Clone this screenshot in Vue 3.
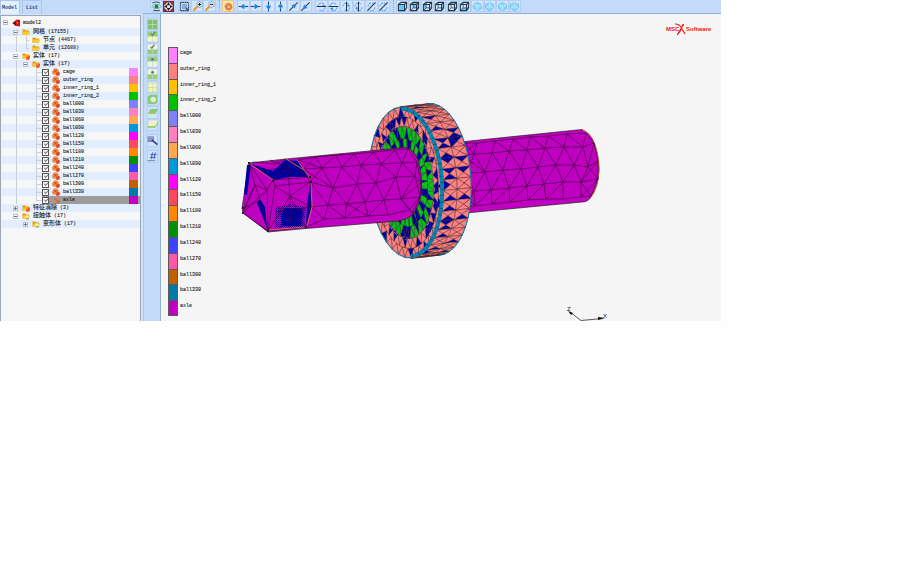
<template>
    <main class="workbench">
        <aside class="model-panel">
            <nav class="tabs">
                <button type="button" class="tab tabActive">Model</button>
                <button type="button" class="tab">List</button>
            </nav>
            <ul class="tree">
                <li v-for="(node, i) in nodes" :key="i" class="row" :class="{ root: i === 0, selected: node.selected }">
                    <i v-for="(g, k) in node.guides.split('')" :key="k" class="guide" :class="guideClass(g)"></i>
                    <component :is="node.leaf ? 'label' : 'div'" class="row-body">
                        <input v-if="node.leaf" type="checkbox" class="check" checked />
                        <button v-else-if="node.toggle" type="button" class="toggle" :class="{ closed: node.toggle === '+' }" :aria-label="'toggle ' + node.name"></button>
                        <i v-else class="guide short" :class="guideClass(node.elbow)"></i>
                        <svg class="node-icon" viewBox="0 0 16 16">
                            <path v-for="(p, k) in nodeIcons[node.icon]" :key="k" v-bind="p" />
                        </svg>
                        <span class="name" :class="{ cjk: !node.leaf && i > 0 }">{{ node.name }}</span>
                        <span v-if="node.count" class="count">({{ node.count }})</span>
                        <span v-if="node.color" class="swatch" :style="{ background: node.color }"></span>
                    </component>
                </li>
            </ul>
        </aside>

        <section class="work-area">
            <div class="toolbar">
                <div v-for="(group, g) in topGroups" :key="g" class="tool-group" :class="'group-' + group.name">
                    <button v-for="(icon, k) in group.icons" :key="k" type="button" class="tool" :class="{ toolActive: icon === 'palette' }" :aria-label="icon">
                        <svg viewBox="0 0 16 16">
                            <path v-for="(p, n) in toolIcons[icon]" :key="n" fill="none" v-bind="p" />
                        </svg>
                    </button>
                </div>
            </div>
            <div class="dock">
                <div v-for="(group, g) in sideGroups" :key="g" class="side-group" :class="{ many: group.length > 1 }">
                    <button v-for="(icon, k) in group" :key="k" type="button" class="tool" :aria-label="icon">
                        <svg viewBox="0 0 16 16">
                            <path v-for="(p, n) in toolIcons[icon]" :key="n" fill="none" v-bind="p" />
                        </svg>
                    </button>
                </div>
            </div>
            <div class="viewport">
                <ul class="legend">
                    <li v-for="part in parts" :key="part.name">
                        <span class="legend-color" :style="{ background: part.color }"></span>
                        <span class="legend-name">{{ part.name }}</span>
                    </li>
                </ul>
                <svg class="scene" viewBox="225 14 496 307">
                    <defs>
                        <pattern id="dither" width="2" height="2" patternUnits="userSpaceOnUse">
                            <path d="M0 0h1v1h-1zM1 1h1v1h-1z" fill="#0000a0" />
                        </pattern>
                    </defs>

                    <!-- right half of the axle -->
                    <path d="M460 142L577 130L582 129.500Q588 132 592 138Q599 152 599 170Q598 188 591 197Q588 202 582 202L466 213Z" fill="#c000c0" stroke="#222" stroke-width=".7" />
                    <path d="M582 129.500Q588 132 592 138Q599 152 599 170Q598 188 591 197" fill="none" stroke="#d4603c" stroke-width="1" />
                    <path :d="rightMesh" class="mesh" />

                    <!-- bearing -->
                    <path v-for="(t, k) in sideFaces" :key="'s' + k" :d="t.d" :fill="t.fill" class="face" />
                    <path :d="rimBack" class="rim thin" />
                    <path v-for="(t, k) in frontFaces" :key="'f' + k" :d="t.d" :fill="t.fill" class="face" />
                    <path :d="ringPath(0.99)" class="rim thin" />
                    <path :d="rimFront" class="rim" />
                    <path :d="rimFront" class="rim-marks" />
                    <path :d="ringPath(0.76)" class="cage" />
                    <path :d="ringPath(0.73)" class="cage-marks" />

                    <!-- left half of the axle -->
                    <path d="M249 163L286 159L405 147.500Q414 149 418 160Q423 176 421 194Q419 208 412 215Q407 220 398 221L300 229L268 232L243 213L242 208Z" fill="#c000c0" stroke="#222" stroke-width=".7" />
                    <path :d="leftMesh" class="mesh" />
                    <path d="M251 164L273 171L285 160L298 161L309 177L289 177L274 180ZM247 165L251 165L247 195L244 194ZM260 199L265 207L267 228L257 203ZM311 182L312 207L306 225L307 203ZM285 208L300 208L303 212L301 226L281 226L281 214Z" fill="#0000a0" />
                    <path d="M275 208L290 204L306 207L304 228L275 228Z" fill="url(#dither)" />
                    <path :d="headMesh" class="mesh" />
                    <path d="M250 164L273 180M298 161L309 177M286 159L304 170M311 183L312 207L307 226M269 230L304 227" fill="none" stroke="#f07850" stroke-width=".8" />
                    <path d="M248 162h2v2h-2zM272 180h2v2h-2zM309 176h2v2h-2zM310 181h2v2h-2zM267 230h2v2h-2zM242 212h2v2h-2zM305 226h2v2h-2zM242 207h2v2h-2z" fill="#222" />

                    <!-- vendor mark -->
                    <g class="vendor">
                        <text x="666" y="31">MSC</text>
                        <text x="686" y="31">Software</text>
                        <path d="M675 24Q680 24 682 29L685 34M677 35Q680 31 683 25M678 34L681 30" />
                        <circle cx="683" cy="25" r="1" />
                    </g>

                    <!-- axes -->
                    <path d="M603 318.500L581 320.500L570 312" fill="none" stroke="#333" stroke-width=".8" />
                    <path d="M605 318L598 317L598 320ZM568 311L571 315L573 313Z" fill="#111" />
                    <text x="567" y="311" class="axis">Z</text>
                    <text x="603" y="318" class="axis">X</text>
                </svg>
            </div>
        </section>
    </main>
</template>

<script setup>
    const parts = [
        { name: 'cage', color: '#ff80ff' },
        { name: 'outer_ring', color: '#ff8080' },
        { name: 'inner_ring_1', color: '#ffc000' },
        { name: 'inner_ring_2', color: '#00c000' },
        { name: 'ball000', color: '#8080ff' },
        { name: 'ball030', color: '#ff80c0' },
        { name: 'ball060', color: '#ffa850' },
        { name: 'ball090', color: '#0098d8' },
        { name: 'ball120', color: '#ff00ff' },
        { name: 'ball150', color: '#ff4860' },
        { name: 'ball180', color: '#ff8800' },
        { name: 'ball210', color: '#009000' },
        { name: 'ball240', color: '#4040ff' },
        { name: 'ball270', color: '#ff58a8' },
        { name: 'ball300', color: '#c06000' },
        { name: 'ball330', color: '#0078a8' },
        { name: 'axle', color: '#c000c0' }
    ];

    // guides: one character per indent level, "|" line, "+" tee, "L" last corner
    const nodes = [
        { name: 'model2', guides: '', toggle: '-', icon: 'model' },
        { name: '网格', count: '17155', guides: ' ', toggle: '-', icon: 'folder' },
        { name: '节点', count: '4467', guides: ' |', elbow: '+', icon: 'folder' },
        { name: '单元', count: '12688', guides: ' |', elbow: 'L', icon: 'folder' },
        { name: '实体', count: '17', guides: ' ', toggle: '-', icon: 'bodies' },
        { name: '实体', count: '17', guides: ' |', toggle: '-', icon: 'bodies' },
        ...parts.map((part, i) => ({
            ...part,
            guides: i === parts.length - 1 ? ' | L' : ' | +',
            leaf: true,
            icon: 'part',
            selected: part.name === 'axle'
        })),
        { name: '特征消除', count: '3', guides: ' ', toggle: '+', icon: 'bodies' },
        { name: '接触体', count: '17', guides: ' ', toggle: '-', icon: 'contact' },
        { name: '变形体', count: '17', guides: '  ', toggle: '+', icon: 'contact' }
    ];

    const guideClass = (g) => ({ '|': 'line', '+': 'line stub', 'L': 'corner stub' }[g]);

    const folder = [
        { d: 'M1 3h5l2 2h6v8h-13z', fill: '#e0a010' },
        { d: 'M3 7h13l-2 7h-13z', fill: '#ffc830' }
    ];
    const nodeIcons = {
        model: [
            { d: 'M1 8L9 1L16 2V15L8 14Z', fill: '#d01818' },
            { d: 'M1 8L8 5V14ZM12 3L16 2V8Z', fill: '#701010' },
            { d: 'M9 5l4 2-3 4z', fill: '#f06060' }
        ],
        folder,
        bodies: [...folder, { d: 'M8 9h4v-2h4v6l-3 3h-4z', fill: '#f06028' }],
        contact: [...folder, { d: 'M7 7h6v6h-6z', fill: '#fff0a0' }, { d: 'M8 12h6l-2 3h-3z', fill: '#8090a0' }],
        part: [
            { d: 'M1 6L4 1L10 1L13 4V8L9 7L7 13H2L0 9Z', fill: '#f08038' },
            { d: 'M4 5h5v3h-3z', fill: '#b85828' },
            { d: 'M9 8L13 7L16 10L15 15L10 16L7 13Z', fill: '#e84820' }
        ]
    };

    const blue = '#2080e8';
    const dark = '#26364a';
    const lens = (sign) => [
        { d: 'M2 14L8 8', stroke: '#e0a020', 'stroke-width': 3 },
        { d: 'M7 5a4 4 0 1 0 8 0a4 4 0 1 0-8 0', stroke: '#6a8098', fill: '#e8f4ff' },
        { d: sign, stroke: '#111', 'stroke-width': 1.5 }
    ];
    const cube = (face) => [
        { d: face, fill: '#60c8f8' },
        { d: 'M2 5h9v9h-9zM2 5l4-3h8v8l-3 4M11 5l3-3', stroke: dark, 'stroke-width': 1.5 }
    ];
    const wire = { d: 'M6 2v8h8M6 10l-4 4', stroke: dark };
    const ball = (d) => [
        { d: 'M2 5L8 2L14 5V11L8 14L2 11Z', fill: '#90d8ff', stroke: '#58b8f0' },
        { d, stroke: '#d0f0ff', 'stroke-width': 1 }
    ];
    const orbit = { d: 'M3 8a5 5 0 0 1 9-3M13 9a5 5 0 0 1-9 3', stroke: '#58a0f0', 'stroke-width': 1.5, 'stroke-dasharray': '3 1' };
    const tiles = (top, bottom) => [
        { d: 'M1 1h14v7h-14z', fill: top },
        { d: 'M1 8h14v7h-14z', fill: bottom },
        { d: 'M8 1v14M1 8h14', stroke: '#c0dcb0' }
    ];
    const axisLine = (d) => ({ d, stroke: dark, 'stroke-width': 1.5 });

    const toolIcons = {
        eye: [
            { d: 'M1 8Q8 1 15 8Q8 14 1 8', fill: '#e8f8f0', stroke: '#508878' },
            { d: 'M5 8a3 3 0 1 0 6 0a3 3 0 1 0-6 0', fill: '#188048' },
            { d: 'M2 3q6-3 11 0M3 13q6 2 10 0', stroke: '#405870', 'stroke-width': 1.5 }
        ],
        fit: [
            { d: 'M1 1h14v14h-14z', fill: '#e8e8ee', stroke: '#a01820', 'stroke-width': 2 },
            { d: 'M8 2l3 4h-6zM8 14l3-4h-6zM2 8l4-3v6zM14 8l-4-3v6zM2 2h4l-4 4zM14 2h-4l4 4zM2 14h4l-4-4zM14 14h-4l4-4z', fill: '#222' }
        ],
        area: [
            { d: 'M4 4h8v8h-8z', fill: '#80b0e0' },
            { d: 'M2 2h12v12h-12z', stroke: '#223', 'stroke-width': 1.5, 'stroke-dasharray': '2 1' },
            { d: 'M9 9l6 3-3 3z', fill: '#405070' }
        ],
        zoomIn: lens('M9 5h4M11 3v4'),
        zoomOut: lens('M9 5h4'),
        palette: [
            { d: 'M8 2L13 5L14 10L10 14L4 13L2 8L4 4Z', fill: '#e88848' },
            { d: 'M6 7l2-1 3 2v2l-3 1-2-1z', fill: '#ffd8a0', stroke: '#c06028' }
        ],
        left: [axisLine('M1 8h14'), { d: 'M3 8l6-4v3h3v2h-3v3z', fill: blue }],
        right: [axisLine('M1 8h14'), { d: 'M13 8l-6-4v3h-3v2h3v3z', fill: blue }],
        down: [axisLine('M8 1v14'), { d: 'M8 13l-4-6h3v-3h2v3h3z', fill: blue }],
        up: [axisLine('M8 1v14'), { d: 'M8 3l-4 6h3v3h2v-3h3z', fill: blue }],
        out: [axisLine('M2 14L14 2'), { d: 'M12 4l-2 7-5-5z', fill: blue }],
        into: [axisLine('M2 14L14 2'), { d: 'M4 12l2-7 5 5z', fill: blue }],
        rotX1: [orbit, axisLine('M1 8h14'), { d: 'M11 5l3 2h-5z', fill: blue }],
        rotX2: [orbit, axisLine('M1 8h14'), { d: 'M3 11l4-2v4z', fill: blue }],
        rotY1: [orbit, axisLine('M8 1v14'), { d: 'M9 5l4 1-3 3z', fill: blue }],
        rotY2: [orbit, axisLine('M8 1v14'), { d: 'M7 12l-4-1 3-3z', fill: blue }],
        rotZ: [orbit, axisLine('M2 14L14 2')],
        cubeFront: cube('M2 5h9v9h-9z'),
        cubeBack: [...cube('M6 2h8v8h-8z'), wire],
        cubeLeft: [...cube('M2 5l4-3v8l-4 4z'), wire],
        cubeRight: [...cube('M11 5l3-3v8l-3 4z'), wire],
        cubeTop: [...cube('M2 5l4-3h8l-3 3z'), wire],
        cubeBottom: [...cube('M2 14l4-4h8l-3 4z'), wire],
        iso1: ball('M8 14V8L2 5M8 8l6-3'),
        iso2: ball('M8 2v6l-6 3M8 8l6 3'),
        iso3: ball('M8 14V8L2 5M8 8l6-3'),
        iso4: ball('M8 2v6l-6 3M8 8l6 3'),
        elements: [...tiles('#80c070', '#80c070')],
        addTop: [...tiles('#90cc80', '#f8f4c0'), { d: 'M6 4l2 2 4-5', stroke: '#587850', 'stroke-width': 1.5 }],
        addBottom: [...tiles('#f0f4d8', '#90cc80'), { d: 'M5 4l2 2 4-5', stroke: '#606860', 'stroke-width': 1.5 }],
        hideTop: [...tiles('#98cc88', '#f0f4d8'), { d: 'M6 5a2 2 0 1 0 4 0a2 2 0 1 0-4 0', fill: '#607868' }],
        hideBottom: [...tiles('#f0f4d8', '#98cc88'), { d: 'M6 5a2 2 0 1 0 4 0a2 2 0 1 0-4 0', fill: '#607868' }],
        grid: [...tiles('#f4f4c0', '#f4f4c0'), { d: 'M2 2h12v12h-12z', stroke: '#a0cc90', 'stroke-dasharray': '2 2' }],
        solid: [{ d: 'M1 4l3-3h11v11l-3 3h-11z', fill: '#88c880' }, { d: 'M5 8a4 4 0 1 0 8 0a4 4 0 1 0-8 0', fill: '#e0f0c8' }],
        plane: [{ d: 'M5 3h11l-4 7h-11z', fill: '#88c878' }, { d: 'M1 10h11v3h-11z', fill: '#d8ecc8' }],
        planeLight: [{ d: 'M5 3h11l-4 7h-11z', fill: '#f4f4b8' }, { d: 'M1 10h11l4-7v3l-4 7h-11z', fill: '#98cc88' }],
        pick: [{ d: 'M1 2h9v8h-9z', fill: '#7078c0' }, { d: 'M2 4h7M2 7h7', stroke: '#c8d0f8' }, { d: 'M7 7L15 14', stroke: '#383c90', 'stroke-width': 2.5 }],
        number: [{ d: 'M8 2L6 12M12 2L10 12M5 5h9M4 9h9', stroke: '#4868b8', 'stroke-width': 1.5 }, { d: 'M1 14h11', stroke: '#485898', 'stroke-width': 1 }]
    };

    const topGroups = [
        { name: 'view', icons: ['eye', 'fit'] },
        { name: 'zoom', icons: ['area', 'zoomIn', 'zoomOut'] },
        { name: 'shade', icons: ['palette'] },
        { name: 'move', icons: ['left', 'right', 'down', 'up', 'out', 'into'] },
        { name: 'rotate', icons: ['rotX1', 'rotX2', 'rotY1', 'rotY2', 'rotZ', 'rotZ'] },
        { name: 'cubes', icons: ['cubeFront', 'cubeBack', 'cubeLeft', 'cubeRight', 'cubeTop', 'cubeBottom', 'iso1', 'iso2', 'iso3', 'iso4'] }
    ];
    const sideGroups = [
        ['elements', 'addTop', 'addBottom', 'hideTop', 'hideBottom', 'grid', 'solid', 'plane', 'planeLight'],
        ['pick'],
        ['number']
    ];

    // joins every node to its two nearest nodes in the next row
    const meshPath = (rows) => {
        let d = '';
        rows.forEach((row, r) => {
            d += 'M' + row.map((p) => p.join(' ')).join('L');
            const next = rows[r + 1];
            if (!next) return;
            row.forEach((p) => {
                const near = [...next].sort((a, b) => Math.abs(a[0] - p[0]) - Math.abs(b[0] - p[0]));
                near.slice(0, 2).forEach((q) => {
                    d += `M${p.join(' ')}L${q.join(' ')}`;
                });
            });
        });
        return d;
    };

    const rightMesh = meshPath([
        [[465, 143], [477, 143], [495, 141], [513, 139], [530, 137], [548, 136], [567, 134], [586, 133]],
        [[462, 155], [474, 154], [492, 153], [509, 151], [527, 150], [545, 148], [564, 147], [583, 147], [594, 143]],
        [[467, 173], [485, 172], [503, 170], [521, 169], [538, 167], [556, 165], [574, 165], [588, 167], [598, 161]],
        [[462, 192], [474, 191], [491, 190], [509, 188], [527, 186], [544, 184], [563, 182], [581, 182], [598, 179]],
        [[466, 207], [475, 206], [492, 204], [510, 202], [528, 200], [546, 199], [563, 199], [581, 197], [591, 196]]
    ]);
    const leftMesh = meshPath([
        [[298, 160], [316, 157], [336, 155], [354, 154], [374, 152], [395, 150], [408, 149]],
        [[303, 169], [322, 168], [342, 167], [361, 165], [381, 164], [402, 163], [417, 162]],
        [[310, 182], [333, 188], [357, 184], [376, 183], [396, 177], [415, 176], [421, 183]],
        [[311, 207], [328, 205], [347, 204], [365, 202], [384, 200], [401, 199], [420, 197]],
        [[306, 227], [324, 219], [345, 218], [368, 216], [388, 215], [409, 210], [413, 213]]
    ]);
    const headMesh = 'M249 163L273 180L310 177L286 159M273 180L267 190L249 163L255 185L267 190L268 231L243 213L267 190M275 186L310 182M273 180L275 186L268 231M275 186L290 196L310 182M290 196L311 207M290 196L268 231M290 196L306 227L268 231M306 227L311 207V182M255 185L244 208L260 200L268 231M255 185L260 200M262 170L289 168L310 177M289 168L270 160M289 168L273 180M290 196L288 170M277 206L300 226M304 207L280 228M290 196V229M275 212L311 207M243 213L255 185M253 162L275 164L286 159';

    let seed = 11;
    const random = () => {
        seed = (seed * 16807) % 2147483647;
        return seed / 2147483647;
    };

    const salmon = '#ff8080';
    const navy = '#0000a0';
    const green = '#00c818';
    const tilt = -4 * Math.PI / 180;

    const ringPoint = (angle, scale, shift = 0) => {
        const x = 37 * scale * Math.cos(angle);
        const y = 76 * scale * Math.sin(angle);
        return [
            (406 + shift + x * Math.cos(tilt) - y * Math.sin(tilt)).toFixed(1),
            (182.5 - shift / 9 + x * Math.sin(tilt) + y * Math.cos(tilt)).toFixed(1)
        ];
    };
    const polygon = (points) => 'M' + points.map((p) => p.join(' ')).join('L') + 'Z';
    const arc = (from, to, scale, shift) => {
        const points = [];
        for (let i = 0; i <= 60; i++) points.push(ringPoint(from + (to - from) * i / 60, scale, shift).join(' '));
        return 'M' + points.join('L');
    };
    const ringPath = (scale) => arc(0, Math.PI * 2, scale, 0);
    const rimFront = arc(-Math.PI / 2, Math.PI / 2, 0.97, 0);
    const rimBack = arc(-Math.PI / 2, Math.PI / 2, 1, 28);

    const frontFaces = [];
    const addBand = (inner, outer, count, color, share) => {
        const step = Math.PI * 2 / count;
        for (let i = 0; i < count; i++) {
            const a = i * step;
            const tri = [
                [ringPoint(a, outer), ringPoint(a + step, outer), ringPoint(a + step / 2, inner)],
                [ringPoint(a + step / 2, inner), ringPoint(a + step * 1.5, inner), ringPoint(a + step, outer)]
            ];
            tri.forEach((t) => frontFaces.push({ d: polygon(t), fill: random() < share ? navy : color }));
        }
    };
    addBand(0.87, 1, 36, salmon, 0.18);
    addBand(0.74, 0.87, 36, salmon, 0.4);
    addBand(0.58, 0.74, 36, green, 0.36);
    addBand(0.3, 0.58, 32, green, 0.4);

    const sideFaces = [];
    const slices = 22;
    const strips = 2;
    for (let i = 0; i < slices; i++) {
        const step = Math.PI / slices;
        const a = -Math.PI / 2 + i * step;
        for (let k = 0; k < strips; k++) {
            const s = k * 28 / strips;
            const e = (k + 1) * 28 / strips;
            const m = (s + e) / 2;
            const corners = [ringPoint(a, 1, s), ringPoint(a, 1, e), ringPoint(a + step, 1, e), ringPoint(a + step, 1, s)];
            const middle = ringPoint(a + step / 2, 1, m);
            corners.forEach((c, n) => {
                const flat = n % 2 === 0;
                const share = flat ? 0.12 + 0.35 * Math.cos(a) : 0.04;
                sideFaces.push({ d: polygon([c, corners[(n + 1) % 4], middle]), fill: random() < share ? navy : salmon });
            });
        }
    }
</script>

<style>
    body{
        margin: 0;
        background: #fefefe;
    }
</style>

<style scoped>
    .workbench{
        display: grid;
        grid-template-columns: 143px 1fr;
        width: calc(80vw + 1px);
        background: #c3daf8;
        font-family: "Liberation Mono", "Noto Sans CJK SC", monospace;
        font-size: 5px;
        line-height: 8px;
        color: #222;
    }

    button{
        padding: 0;
        border: 0;
        background: none;
        font: inherit;
        color: inherit;
    }

    ul{
        margin: 0;
        padding: 0;
        list-style: none;
    }

    .model-panel{
        display: flex;
        flex-direction: column;
        background: #d4e4fa;
    }

    .tabs{
        display: flex;
        height: 14px;
        gap: 2px;
        background: #c3daf8;
    }

    .tab{
        padding: 0 3px;
        border: 1px solid #a9c6ec;
        border-bottom: 0;
        color: #244a80;
        font-weight: bold;
    }

    .tabActive{
        padding: 0 2px 0 1px;
        background: #e4efff;
    }

    .tree{
        flex: 1;
        margin: 1px 2px 0 0;
        border: 1px solid #9ba6b6;
        border-bottom: 0;
        background: #f6f6f6;
    }

    .row{
        display: flex;
        height: 8px;
        padding-left: 1px;
    }

    .row:nth-child(even){
        background: #e2eeff;
    }

    .root{
        height: 12px;
        padding-top: 1px;
        box-sizing: border-box;
    }

    .row-body{
        display: flex;
        flex: 1;
        align-items: center;
    }

    .selected .row-body{
        background: #9c9c9c;
    }

    .selected .node-icon{
        opacity: 0.5;
    }

    .guide{
        position: relative;
        flex: none;
        width: 10px;
    }

    .short{
        width: 7px;
        align-self: stretch;
    }

    .line::before,
    .corner::before{
        content: "";
        position: absolute;
        top: 0;
        bottom: 0;
        left: 4px;
        border-left: 1px solid #cbd0d8;
    }

    .corner::before{
        bottom: 4px;
    }

    .stub::after{
        content: "";
        position: absolute;
        top: 4px;
        left: 4px;
        right: 0;
        border-top: 1px solid #cbd0d8;
    }

    .toggle{
        position: relative;
        width: 5px;
        height: 5px;
        margin: 0 1px;
        border: 1px solid #b4bfd0;
        background: #fff;
    }

    .toggle::before,
    .closed::after{
        content: "";
        position: absolute;
        top: 1px;
        left: 0;
        width: 3px;
        height: 1px;
        background: #6a7688;
    }

    .closed::after{
        top: 0;
        left: 1px;
        width: 1px;
        height: 3px;
    }

    .check{
        appearance: none;
        position: relative;
        width: 7px;
        height: 7px;
        margin: 0;
        border: 1px solid #555;
        background: #fff;
    }

    .check:checked::after{
        content: "";
        position: absolute;
        top: 0;
        left: 1px;
        width: 3px;
        height: 2px;
        border-left: 1px solid #777;
        border-bottom: 1px solid #777;
        transform: rotate(-45deg);
    }

    .node-icon{
        width: 8px;
        height: 8px;
        margin: 0 3px;
    }

    .name{
        white-space: nowrap;
        -webkit-text-stroke: 0.1px #222;
    }

    .cjk{
        margin-right: 3px;
        font-size: 6px;
    }

    .count{
        -webkit-text-stroke: 0.1px #222;
    }

    .swatch{
        align-self: stretch;
        width: 9px;
        margin: 0 2px 0 auto;
    }

    .work-area{
        display: grid;
        grid-template-columns: 18px 1fr;
        grid-template-rows: 14px auto;
        min-width: 0;
    }

    .toolbar{
        grid-column: 1 / 3;
        display: flex;
        align-items: flex-start;
        gap: 3px;
        padding-left: 7px;
        border-bottom: 1px solid #92b2dc;
        background: #c3daf8;
    }

    .tool-group{
        display: flex;
        height: 12px;
    }

    .group-view{
        width: 25px;
    }

    .group-zoom{
        width: 38px;
    }

    .group-shade{
        width: 12px;
        padding-left: 2px;
        border-left: 1px dotted #90acd4;
    }

    .group-move,
    .group-rotate{
        width: 75px;
    }

    .group-cubes{
        width: 125px;
        padding-left: 2px;
        border-left: 1px dotted #90acd4;
    }

    .tool{
        display: flex;
        flex: 1;
        align-items: center;
        justify-content: center;
        border: 1px solid #b4cff2;
        background: #d2e4fb;
    }

    .toolActive{
        border-color: #e8c888;
        background: #ffe4a8;
    }

    .tool svg{
        width: 11px;
        height: 11px;
        margin: -1px;
    }

    .dock{
        display: flex;
        flex-direction: column;
        gap: 3px;
        padding: 4px 2px 0 3px;
        border-left: 1px solid #a9c6ec;
        border-right: 1px solid #92b2dc;
    }

    .side-group{
        display: flex;
        flex-direction: column;
        height: 13px;
    }

    .many{
        height: 113px;
    }

    .viewport{
        display: flex;
        align-items: flex-start;
        min-width: 0;
        background: #f5f5f5;
    }

    .legend{
        display: flex;
        flex: none;
        flex-direction: column;
        width: 57px;
        height: 269px;
        margin-top: 33px;
        padding-left: 7px;
    }

    .legend li{
        display: flex;
        flex: 1;
        gap: 2px;
    }

    .legend-color{
        width: 8px;
        border: 1px solid #5a5a5a;
        border-bottom: 0;
    }

    .legend li:last-child .legend-color{
        border-bottom: 1px solid #5a5a5a;
    }

    .legend-name{
        padding-top: 2px;
        -webkit-text-stroke: 0.1px #222;
    }

    .scene{
        flex: 1;
        min-width: 0;
    }

    .mesh{
        fill: none;
        stroke: #300030;
        stroke-width: 0.6;
    }

    .face{
        stroke: #301818;
        stroke-width: 0.4;
    }

    .rim{
        fill: none;
        stroke: #0880b0;
        stroke-width: 4;
    }

    .thin{
        stroke-width: 1;
    }

    .rim-marks{
        fill: none;
        stroke: #103850;
        stroke-width: 4;
        stroke-dasharray: 0.5 6;
    }

    .cage{
        fill: none;
        stroke: #c070c0;
        stroke-width: 1;
        stroke-dasharray: 4 3;
    }

    .cage-marks{
        fill: none;
        stroke: #b06030;
        stroke-width: 1;
        stroke-dasharray: 2 2;
    }

    .vendor{
        font-family: "Liberation Sans", sans-serif;
        font-size: 6px;
        font-weight: bold;
        fill: #f01818;
    }

    .vendor path{
        fill: none;
        stroke: #f01818;
        stroke-width: 1.2;
    }

    .axis{
        font-family: "Liberation Sans", sans-serif;
        font-size: 6px;
        fill: #222;
    }
</style>
